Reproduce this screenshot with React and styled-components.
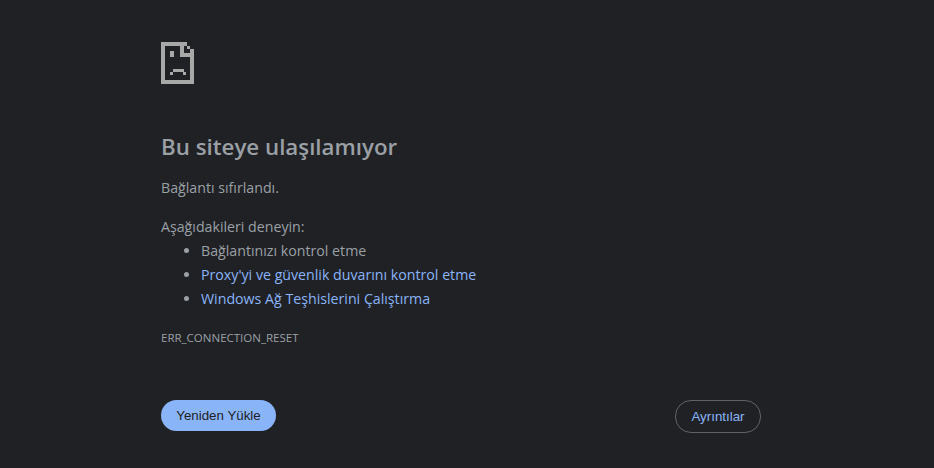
import React from 'react';
import styled, { createGlobalStyle } from 'styled-components';

const GlobalStyle = createGlobalStyle`
    html, body {
        margin: 0;
        height: 100%;
        background: #202124;
    }
`;

const Page = styled.div`
    box-sizing: border-box;
    width: 934px;
    height: 468px;
    padding: 42px 173px 0 161px;
    display: flex;
    flex-direction: column;
    background: #202124;
    color: #9aa0a6;
    font-family: 'Open Sans', 'Noto Sans', sans-serif;
    font-size: 14.2px;
    overflow: hidden;
`;

const IconWrap = styled.div`
    height: 42px;
    color: #a8a8a8;
`;

const Title = styled.h1`
    margin: 48px 0 0;
    font-size: 22.3px;
    line-height: 30px;
    font-weight: 600;
    color: #9aa0a6;
`;

const Text = styled.p`
    margin: ${(p) => p.$top}px 0 0;
    line-height: 24px;
`;

const Tips = styled.ul`
    margin: 0;
    padding: 0 0 0 40px;
    list-style: disc;
`;

const Tip = styled.li`
    line-height: 24px;
    color: #9aa0a6;
`;

const TipLink = styled.a`
    color: #8ab4f8;
    text-decoration: none;
`;

const ErrorCode = styled.div`
    margin-top: 19px;
    font-size: 11.5px;
    line-height: 16px;
    color: #9aa0a6;
`;

const Buttons = styled.div`
    margin-top: 54px;
    display: flex;
    justify-content: space-between;
    align-items: flex-start;
`;

const Button = styled.button`
    box-sizing: border-box;
    padding: 0;
    font-family: 'Liberation Sans', Arial, sans-serif;
    font-size: 13.33px;
    font-weight: 400;
    border-radius: 16px;
`;

const Reload = styled(Button)`
    width: 115px;
    height: 31px;
    border: 0;
    background: #8ab4f8;
    color: #202124;
`;

const Details = styled(Button)`
    width: 86px;
    height: 33px;
    border: 1px solid #5f6368;
    background: transparent;
    color: #8ab4f8;
`;

const SadPage = () => (
    <svg width="33" height="42" viewBox="0 0 33 42" shapeRendering="crispEdges" fill="currentColor">
        <rect x="0" y="0" width="26" height="4" />
        <rect x="0" y="0" width="4" height="42" />
        <rect x="0" y="38" width="33" height="4" />
        <rect x="29" y="11" width="4" height="31" />
        <rect x="19" y="0" width="4" height="15" />
        <rect x="19" y="11" width="14" height="4" />
        <rect x="26" y="4" width="3" height="3" />
        <rect x="29" y="7" width="4" height="4" />
        <rect x="9" y="9" width="4" height="6" />
        <rect x="12" y="27" width="11" height="3" />
        <rect x="9" y="30" width="3" height="3" />
        <rect x="22" y="30" width="3" height="3" />
    </svg>
);

const App = () => {
    return (
        <Page>
            <GlobalStyle />
            <IconWrap>
                <SadPage />
            </IconWrap>
            <Title>Bu siteye ulaşılamıyor</Title>
            <Text $top={14}>Bağlantı sıfırlandı.</Text>
            <Text $top={15}>Aşağıdakileri deneyin:</Text>
            <Tips>
                <Tip>Bağlantınızı kontrol etme</Tip>
                <Tip><TipLink href="#">Proxy'yi ve güvenlik duvarını kontrol etme</TipLink></Tip>
                <Tip><TipLink href="#">Windows Ağ Teşhislerini Çalıştırma</TipLink></Tip>
            </Tips>
            <ErrorCode>ERR_CONNECTION_RESET</ErrorCode>
            <Buttons>
                <Reload>Yeniden Yükle</Reload>
                <Details>Ayrıntılar</Details>
            </Buttons>
        </Page>
    );
};

export default App;
